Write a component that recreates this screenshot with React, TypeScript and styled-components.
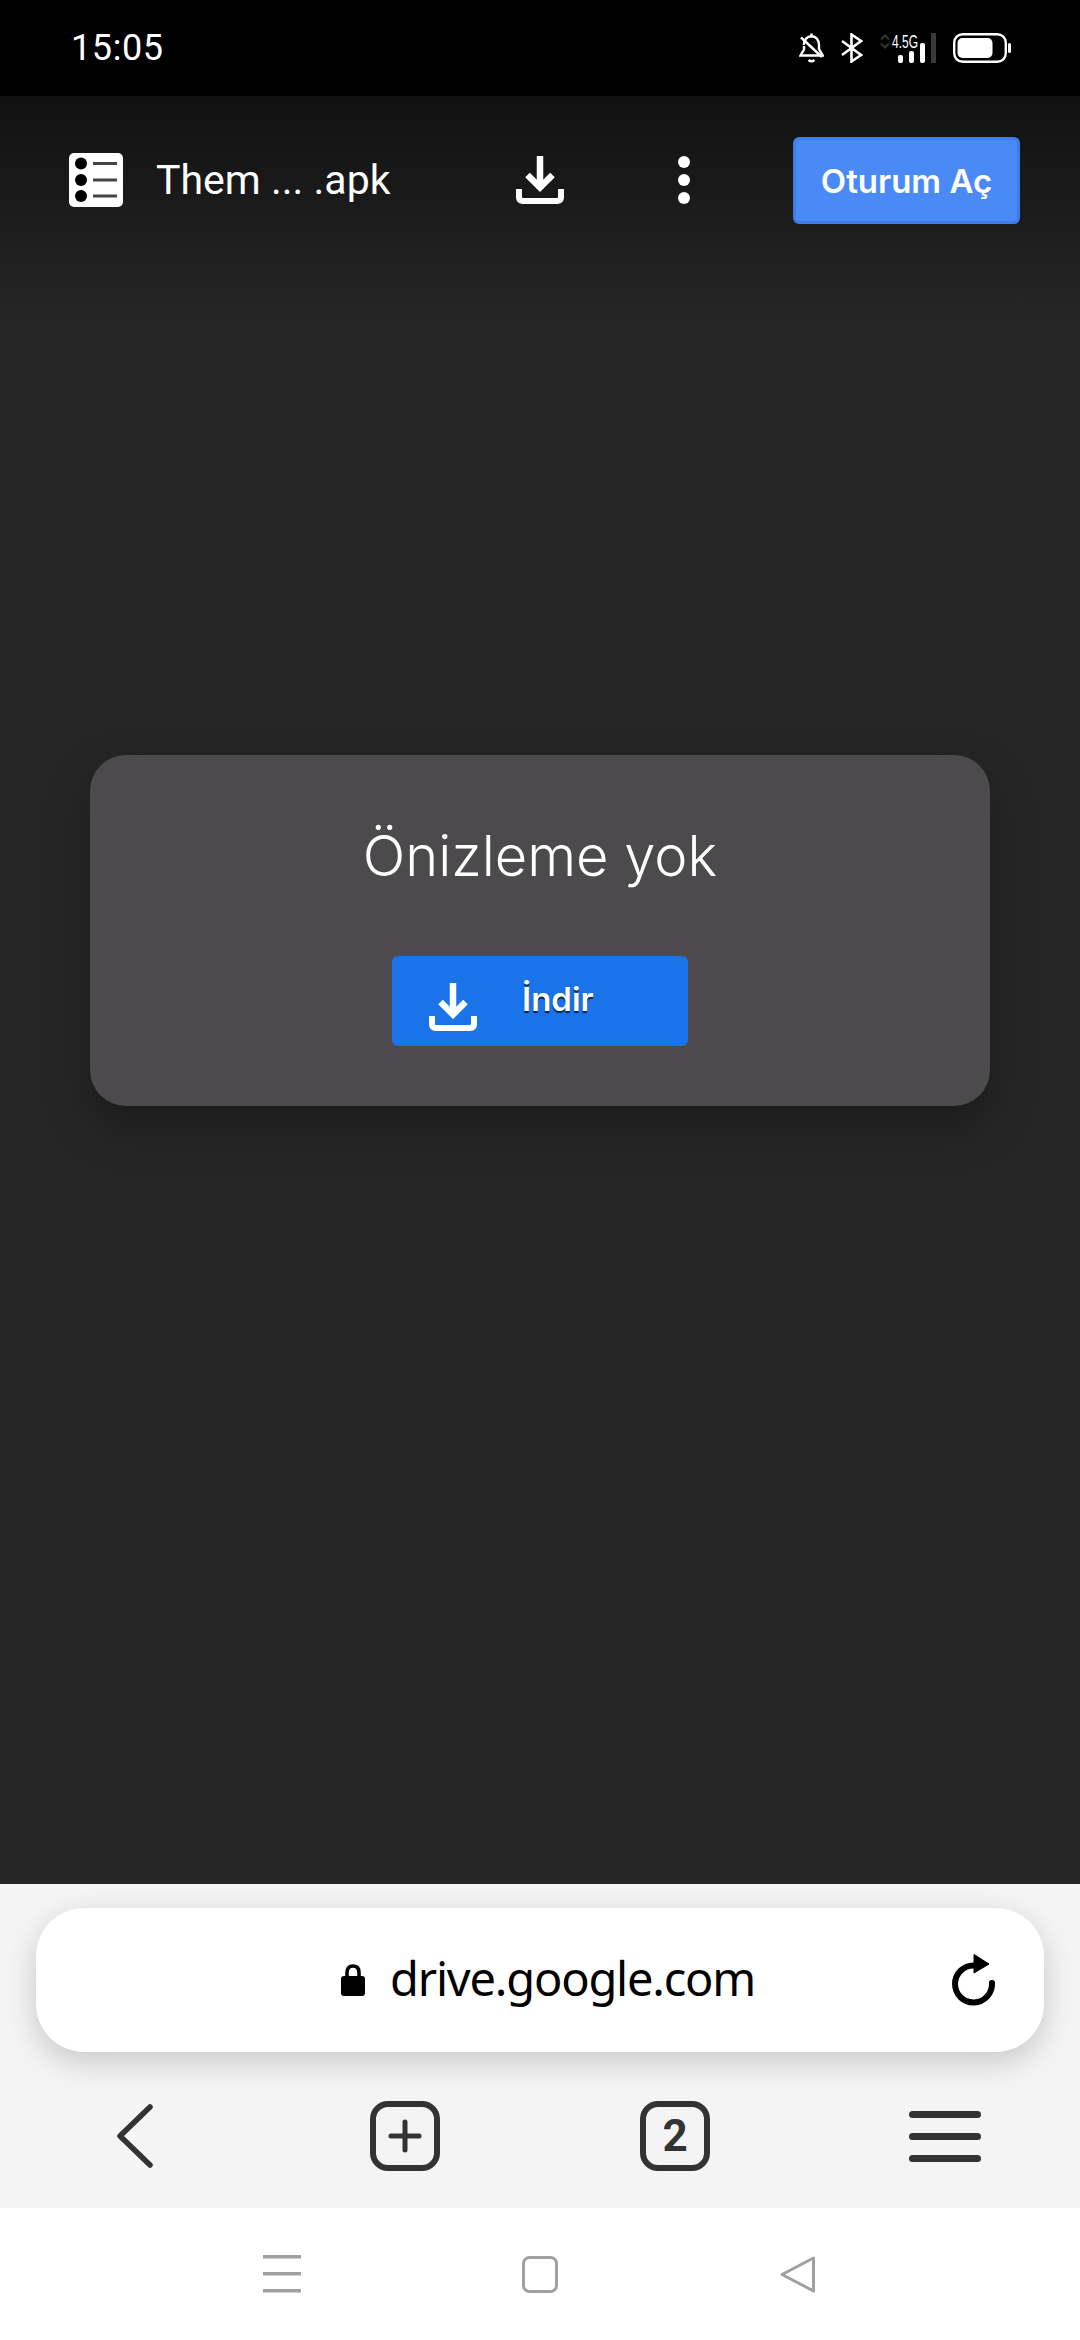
import styled, { createGlobalStyle } from "styled-components";

const GlobalStyle = createGlobalStyle`
  html, body {
    margin: 0;
    padding: 0;
    background: #000;
  }
  * {
    box-sizing: border-box;
  }
`;

const DownloadIcon = () => (
    <svg width="48" height="48" viewBox="0 0 48 48" fill="none" stroke="#fff">
        <path d="M24 0 V33" strokeWidth="6.5" />
        <path d="M11.5 19 L24 31.5 L36.5 19" strokeWidth="6.5" />
        <path d="M3 33 V41 Q3 45 7 45 H41 Q45 45 45 41 V33" strokeWidth="6" />
    </svg>
);

const ListIcon = () => (
    <svg width="54" height="54" viewBox="0 0 54 54">
        <rect width="54" height="54" rx="5" fill="#fff" />
        <circle cx="12" cy="10.5" r="6" fill="#000" />
        <circle cx="12" cy="27" r="6" fill="#000" />
        <circle cx="12" cy="43" r="6" fill="#000" />
        <path d="M24 10.5 H48 M24 27 H48 M24 43 H48" stroke="#444" strokeWidth="3" />
    </svg>
);

const BellOffIcon = () => (
    <svg width="25" height="30" viewBox="0 0 25 30" fill="none" stroke="#fff" strokeWidth="2.4">
        <path d="M12.5 0.5 V3" />
        <path d="M4.8 12 Q5.5 3.5 12.5 3.2 Q19.5 3.5 20 12 V16 L23.8 22.5 H1.5 L5 16.5 V13" />
        <path d="M2 4.5 L23 24" />
        <path d="M9.5 27 Q12.5 29.5 15.5 27" strokeWidth="2.6" />
    </svg>
);

const BluetoothIcon = () => (
    <svg width="22" height="30" viewBox="0 0 22 30" fill="none" stroke="#fff" strokeWidth="2.6">
        <path d="M1 8 L20 22 L10.5 28.5 V1.5 L20 8 L1 22" />
    </svg>
);

const NetworkIcon = () => (
    <svg width="56" height="30" viewBox="0 0 56 30">
        <path d="M1 6.5 L5 2.5 L9 6.5 M1 10.5 L5 14.5 L9 10.5" fill="none" stroke="#333" strokeWidth="2" />
        <text x="12" y="15" fill="#fff" fontFamily="'Liberation Sans', sans-serif" fontSize="18" textLength="26" lengthAdjust="spacingAndGlyphs">4.5G</text>
        <rect x="18" y="22" width="5" height="8" rx="2" fill="#fff" />
        <rect x="29" y="18" width="5" height="12" rx="2" fill="#fff" />
        <rect x="40" y="10" width="5" height="20" rx="2" fill="#fff" />
        <rect x="51" y="0" width="5" height="30" fill="#3a3a3a" />
    </svg>
);

const BatteryIcon = () => (
    <svg width="58" height="30" viewBox="0 0 58 30">
        <rect x="1.2" y="1.2" width="51.6" height="27.6" rx="8.5" fill="none" stroke="#fff" strokeWidth="2.4" />
        <rect x="4.5" y="5" width="35" height="20" rx="5" fill="#fff" />
        <rect x="55" y="10" width="3" height="10" rx="1.5" fill="#fff" />
    </svg>
);

const ReloadIcon = () => (
    <svg width="46" height="52" viewBox="0 0 46 52" fill="none">
        <path d="M23 11.5 A18.5 18.5 0 1 0 41 29" stroke="#000" strokeWidth="6" strokeLinecap="round" />
        <path d="M23 0.5 L38 10 L23 19 Z" fill="#000" stroke="#000" strokeWidth="1" strokeLinejoin="round" />
    </svg>
);

const LockIcon = () => (
    <svg width="24" height="32" viewBox="0 0 24 32" fill="none">
        <path d="M6 14 V8.5 Q6 2 12 2 Q18 2 18 8.5 V14" stroke="#000" strokeWidth="3.6" />
        <rect y="12" width="24" height="20" rx="3" fill="#000" />
    </svg>
);

const BackIcon = () => (
    <svg width="36" height="64" viewBox="0 0 36 64" fill="none" stroke="#333" strokeWidth="5.5" strokeLinecap="round" strokeLinejoin="round">
        <path d="M33 3 L3 32 L33 61" />
    </svg>
);

const PlusIcon = () => (
    <svg width="34" height="34" viewBox="0 0 34 34" fill="none" stroke="#333" strokeWidth="5" strokeLinecap="round">
        <path d="M17 3 V31 M3 17 H31" />
    </svg>
);

const MenuIcon = () => (
    <svg width="72" height="51" viewBox="0 0 72 51" fill="#333">
        <rect y="0" width="72" height="7" rx="3.5" />
        <rect y="22" width="72" height="7" rx="3.5" />
        <rect y="44" width="72" height="7" rx="3.5" />
    </svg>
);

const SysMenuIcon = () => (
    <svg width="38" height="38" viewBox="0 0 38 38" fill="#a0a0a0">
        <rect y="0" width="38" height="3.5" />
        <rect y="17" width="38" height="3.5" />
        <rect y="34" width="38" height="3.5" />
    </svg>
);

const SysHomeIcon = () => (
    <svg width="36" height="37" viewBox="0 0 36 37" fill="none" stroke="#a0a0a0" strokeWidth="3">
        <rect x="1.5" y="1.5" width="33" height="34" rx="6" />
    </svg>
);

const SysBackIcon = () => (
    <svg width="36" height="37" viewBox="0 0 36 37" fill="none" stroke="#a0a0a0" strokeWidth="3" strokeLinejoin="round">
        <path d="M33.5 2 V35 L2 18.5 Z" />
    </svg>
);

export default function App() {
    return (
        <Page>
            <GlobalStyle />
            <StatusBar>
                <Clock>15:05</Clock>
                <StatusIcons>
                    <BellOffIcon />
                    <BluetoothIcon />
                    <NetworkIcon />
                    <BatteryIcon />
                </StatusIcons>
            </StatusBar>
            <Viewer>
                <Toolbar>
                    <FileInfo>
                        <ListIcon />
                        <FileName>Them ... .apk</FileName>
                    </FileInfo>
                    <DownloadIcon />
                    <MoreDots>
                        <span />
                        <span />
                        <span />
                    </MoreDots>
                    <SignInButton>Oturum Aç</SignInButton>
                </Toolbar>
                <PreviewCard>
                    <PreviewTitle>Önizleme yok</PreviewTitle>
                    <DownloadButton>
                        <DownloadIcon />
                        <DownloadLabel>İndir</DownloadLabel>
                    </DownloadButton>
                </PreviewCard>
            </Viewer>
            <BrowserBar>
                <AddressPill>
                    <Address>
                        <LockIcon />
                        <Url>drive.google.com</Url>
                    </Address>
                    <ReloadIcon />
                </AddressPill>
                <BrowserNav>
                    <NavSlot>
                        <BackIcon />
                    </NavSlot>
                    <NavSlot>
                        <TabBox>
                            <PlusIcon />
                        </TabBox>
                    </NavSlot>
                    <NavSlot>
                        <TabBox>2</TabBox>
                    </NavSlot>
                    <NavSlot>
                        <MenuIcon />
                    </NavSlot>
                </BrowserNav>
            </BrowserBar>
            <SystemNav>
                <SysMenuIcon />
                <SysHomeIcon />
                <SysBackIcon />
            </SystemNav>
        </Page>
    );
}

const Page = styled.div`
  display: flex;
  flex-direction: column;
  width: 1080px;
  height: 2340px;
  overflow: hidden;
  font-family: Roboto, sans-serif;
`;

const StatusBar = styled.div`
  display: flex;
  align-items: center;
  justify-content: space-between;
  height: 96px;
  flex: none;
  padding: 0 69px 0 71px;
  background: #000;
`;

const Clock = styled.span`
  font-size: 36px;
  color: #fff;
  letter-spacing: 0.6px;
`;

const StatusIcons = styled.div`
  display: flex;
  align-items: center;
  gap: 17px;
`;

const Viewer = styled.div`
  flex: 1;
  background: linear-gradient(#111 0, #262626 230px);
`;

const Toolbar = styled.div`
  display: flex;
  align-items: center;
  height: 168px;
  padding: 0 60px 0 69px;
`;

const FileInfo = styled.div`
  display: flex;
  align-items: center;
  gap: 33px;
  width: 447px;
`;

const FileName = styled.span`
  font-size: 41px;
  color: #fff;
`;

const MoreDots = styled.div`
  display: flex;
  flex-direction: column;
  gap: 6px;
  margin-left: 114px;

  span {
    display: block;
    width: 12px;
    height: 12px;
    border-radius: 50%;
    background: #fff;
  }
`;

const SignInButton = styled.button`
  width: 227px;
  height: 87px;
  margin-left: auto;
  padding: 2px 0 0;
  border: 3px solid #3f7ce6;
  border-radius: 6px;
  background: #4a8af6;
  color: #fff;
  font-family: Inter, sans-serif;
  font-size: 33px;
  font-weight: 600;
`;

const PreviewCard = styled.div`
  display: flex;
  flex-direction: column;
  align-items: center;
  width: 900px;
  height: 351px;
  margin: 491px auto 0;
  padding-top: 66px;
  border-radius: 36px;
  background: #4c4a4c;
  box-shadow: 0 20px 50px rgba(0, 0, 0, 0.3);
`;

const PreviewTitle = styled.div`
  height: 70px;
  font-family: Inter, sans-serif;
  font-size: 56px;
  line-height: 70px;
  font-weight: 300;
  color: #fff;
`;

const DownloadButton = styled.div`
  display: flex;
  align-items: center;
  width: 296px;
  height: 90px;
  margin-top: 65px;
  padding-left: 37px;
  border-radius: 6px;
  background: #1a73e8;

  svg {
    margin-top: 12px;
  }
`;

const DownloadLabel = styled.span`
  margin: -4px 0 0 45px;
  font-family: Inter, sans-serif;
  font-size: 33px;
  font-weight: 600;
  color: #fff;
  text-shadow: 0 2px 1px rgba(0, 0, 0, 0.7);
`;

const BrowserBar = styled.div`
  display: flex;
  flex-direction: column;
  height: 324px;
  flex: none;
  padding: 24px 36px 0;
  background: #f4f4f4;
`;

const AddressPill = styled.div`
  display: flex;
  align-items: center;
  justify-content: space-between;
  height: 144px;
  padding: 0 47px 0 305px;
  border-radius: 48px;
  background: #fff;
  box-shadow: 0 10px 30px rgba(0, 0, 0, 0.18);
`;

const Address = styled.div`
  display: flex;
  align-items: center;
  gap: 25px;
`;

const Url = styled.span`
  margin-top: -4px;
  font-family: "Noto Sans", sans-serif;
  font-size: 47px;
  letter-spacing: -1.2px;
  color: #000;
`;

const BrowserNav = styled.div`
  display: grid;
  grid-template-columns: repeat(4, 270px);
  margin: 49px -36px 0;
`;

const NavSlot = styled.div`
  display: flex;
  align-items: center;
  justify-content: center;
  height: 70px;
`;

const TabBox = styled.div`
  display: flex;
  align-items: center;
  justify-content: center;
  width: 70px;
  height: 70px;
  border: 6px solid #333;
  border-radius: 18px;
  font-size: 44px;
  font-weight: 700;
  color: #333;
`;

const SystemNav = styled.div`
  display: grid;
  grid-template-columns: repeat(3, 258px);
  justify-content: center;
  justify-items: center;
  align-items: center;
  height: 132px;
  flex: none;
  background: #fff;
`;
